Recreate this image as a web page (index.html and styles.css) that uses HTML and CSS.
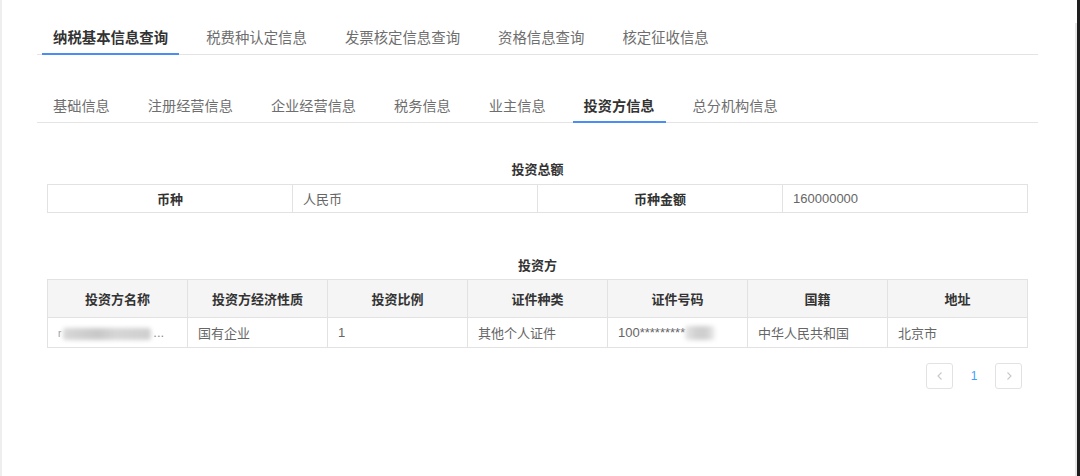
FILE: index.html
```html
<!DOCTYPE html>
<html lang="zh-CN">
<head>
<meta charset="utf-8">
<title>纳税基本信息查询</title>
<link rel="stylesheet" href="styles.css">
</head>
<body>
<div class="frame">
  <div class="page">
    <nav class="tabs tabs-main">
      <span class="tab active">纳税基本信息查询</span>
      <span class="tab">税费种认定信息</span>
      <span class="tab">发票核定信息查询</span>
      <span class="tab">资格信息查询</span>
      <span class="tab">核定征收信息</span>
    </nav>
    <nav class="tabs tabs-sub">
      <span class="tab">基础信息</span>
      <span class="tab">注册经营信息</span>
      <span class="tab">企业经营信息</span>
      <span class="tab">税务信息</span>
      <span class="tab">业主信息</span>
      <span class="tab active">投资方信息</span>
      <span class="tab">总分机构信息</span>
    </nav>

    <section class="block block-total">
      <h3 class="block-title">投资总额</h3>
      <table class="grid grid-total">
        <tr>
          <th>币种</th>
          <td>人民币</td>
          <th>币种金额</th>
          <td>160000000</td>
        </tr>
      </table>
    </section>

    <section class="block block-investors">
      <h3 class="block-title">投资方</h3>
      <table class="grid grid-investors">
        <thead>
          <tr>
            <th>投资方名称</th>
            <th>投资方经济性质</th>
            <th>投资比例</th>
            <th>证件种类</th>
            <th>证件号码</th>
            <th>国籍</th>
            <th>地址</th>
          </tr>
        </thead>
        <tbody>
          <tr>
            <td><span class="mask-lead">r</span><span class="mask mask-name"></span><span class="ellipsis">...</span></td>
            <td>国有企业</td>
            <td>1</td>
            <td>其他个人证件</td>
            <td>100*********<span class="mask mask-id"></span></td>
            <td>中华人民共和国</td>
            <td>北京市</td>
          </tr>
        </tbody>
      </table>
    </section>

    <div class="pager">
      <span class="pager-btn">
        <svg width="10" height="10" viewBox="0 0 10 10"><path d="M6.5 1.5 L3 5 L6.5 8.5" fill="none" stroke="#c8c8c8" stroke-width="1.1"/></svg>
      </span>
      <span class="pager-num">1</span>
      <span class="pager-btn">
        <svg width="10" height="10" viewBox="0 0 10 10"><path d="M3.5 1.5 L7 5 L3.5 8.5" fill="none" stroke="#c8c8c8" stroke-width="1.1"/></svg>
      </span>
    </div>
  </div>
</div>
</body>
</html>
```

FILE: styles.css
```css
* { box-sizing: border-box; }

html, body {
  margin: 0;
  padding: 0;
  background: #ffffff;
}

body {
  font-family: "Liberation Sans", "Noto Sans CJK SC", sans-serif;
  color: #666666;
}

.frame {
  width: 1080px;
  height: 476px;
  border-left: 2px solid #eeeeee;
  border-right: 3px solid #1e1e1e;
  overflow: hidden;
}

.page {
  height: 100%;
  border-right: 2px solid #e6e6e6;
  padding: 0 37px 0 35px;
}

/* tabs */
.tabs {
  display: flex;
  border-bottom: 1px solid #e4e4e4;
  padding-left: 5px;
}

.tabs-main { margin-top: 23px; }
.tabs-sub { margin-top: 36px; }

.tab {
  padding: 0 11px;
  margin-right: 16px;
  line-height: 30px;
  color: #6e6e6e;
  border-bottom: 2px solid transparent;
  margin-bottom: -1px;
  white-space: nowrap;
}

.tabs-main .tab { font-size: 14.4px; }
.tabs-sub .tab { font-size: 14.2px; }

.tab.active {
  color: #333333;
  font-weight: bold;
  border-bottom-color: #4a8ef3;
}

/* blocks */
.block {
  padding: 0 10px;
}

.block-title {
  margin: 0;
  text-align: center;
  font-size: 13px;
  line-height: 20px;
  font-weight: bold;
  color: #333333;
}

.block-total { margin-top: 37px; }
.block-total .block-title { margin-bottom: 4px; }

.block-investors { margin-top: 43px; }
.block-investors .block-title { margin-bottom: 3px; }

.grid {
  width: 100%;
  border-collapse: collapse;
  table-layout: fixed;
  font-size: 13px;
}

.grid th,
.grid td {
  border: 1px solid #e2e2e2;
  padding: 0 10px;
  white-space: nowrap;
  overflow: hidden;
}

.grid th {
  color: #333333;
  font-weight: bold;
  text-align: center;
}

.grid td {
  color: #666666;
  text-align: left;
}

.grid-total th,
.grid-total td {
  height: 28px;
}

.grid-investors th {
  height: 38px;
  background: #f5f5f5;
}

.grid-investors td {
  height: 30px;
}

.mask {
  display: inline-block;
  vertical-align: middle;
  background: #d2d2d2;
  filter: blur(2px);
  border-radius: 3px;
}

.mask-lead {
  color: #9a9a9a;
  font-size: 10px;
}

.mask-name {
  width: 88px;
  height: 12px;
  margin-left: 2px;
  background: linear-gradient(90deg, #d8d8d8, #c8c8c8 40%, #d6d6d6 60%, #cfcfcf);
}

.ellipsis {
  color: #8a8a8a;
  margin-left: 2px;
}

.mask-id {
  width: 30px;
  height: 14px;
  background: linear-gradient(90deg, #e6e6e6, #cfcfcf 40%, #cfcfcf 70%, #eeeeee);
}

/* pager */
.pager {
  display: flex;
  justify-content: flex-end;
  align-items: center;
  margin-top: 15px;
  padding-right: 16px;
}

.pager-btn {
  width: 27px;
  height: 26px;
  border: 1px solid #e2e2e2;
  border-radius: 3px;
  display: flex;
  align-items: center;
  justify-content: center;
}

.pager-num {
  width: 42px;
  text-align: center;
  font-size: 12px;
  color: #409eff;
}
```
